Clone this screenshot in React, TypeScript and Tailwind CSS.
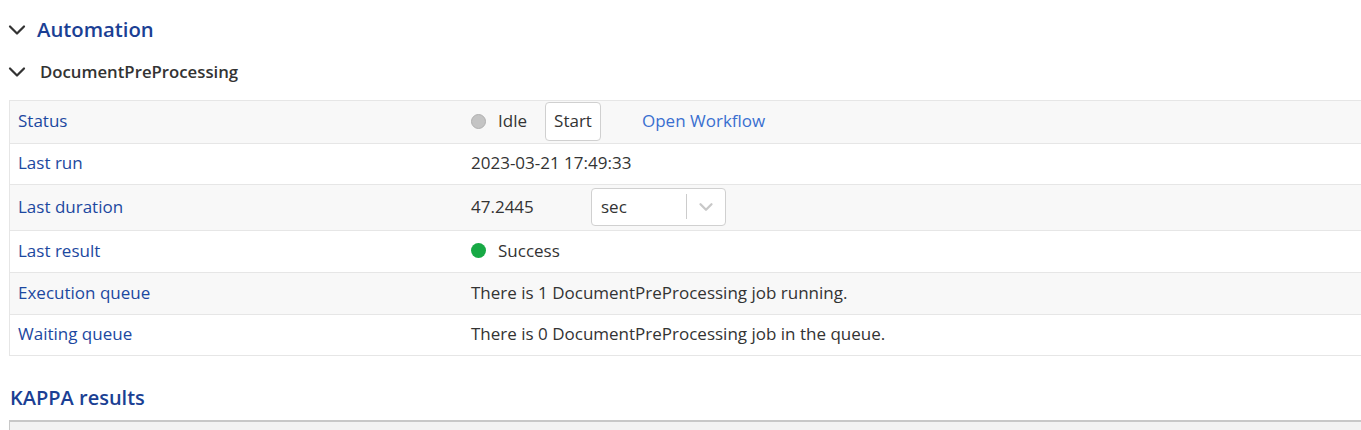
import { ChevronDown } from 'lucide-react'

const font = { fontFamily: '"Open Sans", "Noto Sans", sans-serif' }

function Row({ label, children, shade, h }: { label: string; children: React.ReactNode; shade: boolean; h: string }) {
  return (
    <div className={`grid grid-cols-[453px_1fr] border-b border-[#e6e6e6] pb-[2px] ${shade ? 'bg-[#f8f8f8]' : 'bg-white'} ${h}`}>
      <div className="flex items-center pl-[8px] text-[#1c48a0]">{label}</div>
      <div className="flex items-center pl-[8px] text-[#333]">{children}</div>
    </div>
  )
}

export default function App() {
  return (
    <div className="bg-white h-[430px] overflow-hidden text-[17px]" style={font}>
      {/* Automation header */}
      <div className="flex items-center h-[58px] pl-[3px] pt-[1px]">
        <ChevronDown className="w-[28px] h-[28px] text-[#333]" strokeWidth={1.9} />
        <h1 className="ml-[6px] text-[20.3px] font-semibold text-[#1b3f94]">Automation</h1>
      </div>

      {/* DocumentPreProcessing */}
      <div className="flex items-center h-[28px] pl-[3px]">
        <ChevronDown className="w-[28px] h-[28px] text-[#333]" strokeWidth={1.9} />
        <h2 className="ml-[9px] text-[16.75px] font-semibold text-[#333]">DocumentPreProcessing</h2>
      </div>

      {/* Table */}
      <div className="ml-[9px] mt-[14px] border-t border-l border-[#e6e6e6]">
        <Row label="Status" shade h="h-[43px]">
          <span className="w-[15px] h-[15px] rounded-full bg-[#c4c4c4] border border-[#b0b0b0]" />
          <span className="ml-[12px]">Idle</span>
          <button className="ml-[18px] h-[39px] w-[56px] border border-[#d0d0d0] rounded bg-white text-[#333]">Start</button>
          <a className="ml-[41px] text-[#3a6fd0]">Open Workflow</a>
        </Row>
        <Row label="Last run" shade={false} h="h-[41px]">
          2023-03-21 17:49:33
        </Row>
        <Row label="Last duration" shade h="h-[46px]">
          <span className="w-[120px]">47.2445</span>
          <div className="flex items-center h-[38px] w-[135px] border border-[#d0d0d0] rounded bg-white">
            <span className="pl-[9px] flex-1">sec</span>
            <span className="w-px h-[25px] bg-[#ccc]" />
            <ChevronDown className="w-[22px] h-[22px] mx-[8px] text-[#c8c8c8]" strokeWidth={2.5} />
          </div>
        </Row>
        <Row label="Last result" shade={false} h="h-[42px]">
          <span className="w-[15px] h-[15px] rounded-full bg-[#17a945]" />
          <span className="ml-[12px]">Success</span>
        </Row>
        <Row label="Execution queue" shade h="h-[42px]">
          There is 1 DocumentPreProcessing job running.
        </Row>
        <Row label="Waiting queue" shade={false} h="h-[41px]">
          There is 0 DocumentPreProcessing job in the queue.
        </Row>
      </div>

      {/* KAPPA results */}
      <h2 className="mt-[27px] ml-[10px] text-[20px] font-semibold text-[#1b3f94]">KAPPA results</h2>
      <div className="ml-[9px] mt-[7px] h-[40px] border-t-2 border-l border-[#c8c8c8] bg-[#f3f3f3]" />
    </div>
  )
}
